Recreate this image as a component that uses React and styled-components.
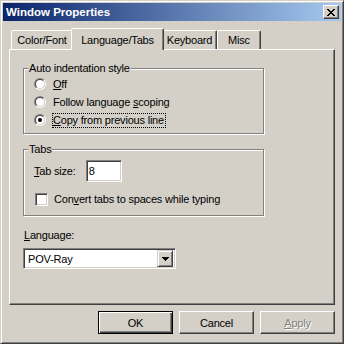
import React from "react";
import styled, { createGlobalStyle } from "styled-components";

const GlobalStyle = createGlobalStyle`
  html, body {
    margin: 0;
    padding: 0;
    background: #d4d0c8;
  }
  body {
    font-family: "Liberation Sans", Arial, sans-serif;
    font-size: 11px;
    letter-spacing: -0.2px;
    color: #000;
  }
`;

const Window = styled.div`
  width: 344px;
  height: 344px;
  box-sizing: border-box;
  background: #d4d0c8;
  border: 1px solid;
  border-color: #d4d0c8 #404040 #404040 #d4d0c8;
  box-shadow: inset 1px 1px 0 #fff, inset -1px -1px 0 #808080;
  padding: 2px;
  display: flex;
  flex-direction: column;
`;

const TitleBar = styled.div`
  height: 18px;
  flex: none;
  display: flex;
  align-items: center;
  justify-content: space-between;
  padding: 0 2px 0 3px;
  background: linear-gradient(to right, #0a246a, #a6caf0);
  color: #fff;
  font-weight: bold;
  font-size: 11.5px;
  letter-spacing: 0;
`;

const CloseButton = styled.div`
  width: 16px;
  height: 14px;
  box-sizing: border-box;
  background: #d4d0c8;
  border: 1px solid;
  border-color: #fff #404040 #404040 #fff;
  box-shadow: inset -1px -1px 0 #808080;
  display: flex;
  align-items: center;
  justify-content: center;
`;

const Body = styled.div`
  flex: 1;
  display: flex;
  flex-direction: column;
  padding: 7px 6px 7px;
`;

const TabRow = styled.div`
  height: 21px;
  display: flex;
  align-items: flex-end;
  padding-left: 2px;
`;

const Tab = styled.div`
  width: ${(p) => p.$w}px;
  height: 19px;
  box-sizing: border-box;
  background: #d4d0c8;
  border: 1px solid;
  border-bottom: none;
  border-color: #fff #404040 transparent #fff;
  border-radius: 2px 2px 0 0;
  box-shadow: inset -1px 0 0 #808080;
  display: flex;
  align-items: center;
  justify-content: center;
  ${(p) =>
    p.$active &&
    `
    height: 22px;
    margin: 0 -2px -1px;
    position: relative;
    z-index: 1;
  `}
`;

const Panel = styled.div`
  height: 256px;
  box-sizing: border-box;
  border: 1px solid;
  border-color: #fff #404040 #404040 #fff;
  box-shadow: inset -1px -1px 0 #808080;
  padding: 18px 13px 0;
  display: flex;
  flex-direction: column;
  align-items: flex-start;
`;

const GroupBox = styled.div`
  width: 241px;
  box-sizing: border-box;
  border: 1px solid #808080;
  box-shadow: 1px 1px 0 #fff, inset 1px 1px 0 #fff;
  padding: 0 0 ${(p) => p.$pb}px 10px;
  margin-top: ${(p) => p.$mt}px;
  display: flex;
  flex-direction: column;
`;

const GroupTitle = styled.div`
  align-self: flex-start;
  margin: -7px 0 0 -6px;
  padding: 0 1px;
  line-height: 13px;
  background: #d4d0c8;
`;

const RadioRow = styled.div`
  height: 18px;
  display: flex;
  align-items: center;
  &:first-of-type {
    margin-top: 4px;
  }
`;

const Radio = styled.span`
  width: 12px;
  height: 12px;
  box-sizing: border-box;
  flex: none;
  border-radius: 50%;
  border: 1px solid;
  border-color: #808080 #fff #fff #808080;
  margin-right: 6px;
  display: flex;
`;

const RadioWell = styled.span`
  flex: 1;
  border-radius: 50%;
  border: 1px solid;
  border-color: #404040 #d4d0c8 #d4d0c8 #404040;
  background: #fff;
  display: flex;
  align-items: center;
  justify-content: center;
`;

const Dot = styled.span`
  width: 4px;
  height: 4px;
  border-radius: 50%;
  background: #000;
`;

const Label = styled.span`
  border: 1px ${(p) => (p.$focus ? "dotted #000" : "solid transparent")};
  padding: 0 1px 0 0;
  line-height: 13px;
`;

const U = styled.span`
  text-decoration: underline;
`;

const FieldRow = styled.div`
  height: ${(p) => p.$h}px;
  margin-top: ${(p) => p.$mt}px;
  display: flex;
  align-items: center;
`;

const TextBox = styled.div`
  width: 36px;
  height: 22px;
  box-sizing: border-box;
  margin-left: ${(p) => p.$ml}px;
  background: #fff;
  border: 1px solid;
  border-color: #808080 #fff #fff #808080;
  box-shadow: inset 1px 1px 0 #404040, inset -1px -1px 0 #d4d0c8;
  padding: 0 2px;
  display: flex;
  align-items: center;
`;

const CheckBox = styled.span`
  width: 13px;
  height: 13px;
  box-sizing: border-box;
  flex: none;
  margin: 0 6px 0 1px;
  background: #fff;
  border: 1px solid;
  border-color: #808080 #fff #fff #808080;
  box-shadow: inset 1px 1px 0 #404040, inset -1px -1px 0 #d4d0c8;
`;

const FieldLabel = styled.div`
  margin: 13px 0 0 1px;
  line-height: 13px;
`;

const Combo = styled.div`
  width: 153px;
  height: 21px;
  box-sizing: border-box;
  margin-top: 6px;
  background: #fff;
  border: 1px solid;
  border-color: #808080 #fff #fff #808080;
  box-shadow: inset 1px 1px 0 #404040, inset -1px -1px 0 #d4d0c8;
  padding: 2px 2px 2px 4px;
  display: flex;
  align-items: center;
  justify-content: space-between;
`;

const DropButton = styled.span`
  width: 16px;
  height: 17px;
  box-sizing: border-box;
  background: #d4d0c8;
  border: 1px solid;
  border-color: #d4d0c8 #404040 #404040 #d4d0c8;
  box-shadow: inset 1px 1px 0 #fff, inset -1px -1px 0 #808080;
  display: flex;
  align-items: center;
  justify-content: center;
`;

const ButtonRow = styled.div`
  margin-top: 6px;
  display: flex;
  justify-content: flex-end;
  gap: 6px;
`;

const Button = styled.div`
  width: 75px;
  height: 23px;
  box-sizing: border-box;
  border: 1px solid;
  border-color: #fff #404040 #404040 #fff;
  box-shadow: inset -1px -1px 0 #808080;
  display: flex;
  align-items: center;
  justify-content: center;
  ${(p) =>
    p.$default &&
    `
    border-color: #000;
    box-shadow: inset 1px 1px 0 #fff, inset -1px -1px 0 #404040, inset -2px -2px 0 #808080;
  `}
  ${(p) =>
    p.$disabled &&
    `
    color: #808080;
    text-shadow: 1px 1px 0 #fff;
  `}
`;

const CloseGlyph = () => (
  <svg width="8" height="7" viewBox="0 0 8 7" shapeRendering="crispEdges">
    <path
      fill="#000"
      d="M0 0h2v1H0zM6 0h2v1H6zM1 1h2v1H1zM5 1h2v1H5zM2 2h4v1H2zM3 3h2v1H3zM2 4h4v1H2zM1 5h2v1H1zM5 5h2v1H5zM0 6h2v1H0zM6 6h2v1H6z"
    />
  </svg>
);

const DownArrow = () => (
  <svg width="7" height="4" viewBox="0 0 7 4" shapeRendering="crispEdges">
    <path fill="#000" d="M0 0h7v1H0zM1 1h5v1H1zM2 2h3v1H2zM3 3h1v1H3z" />
  </svg>
);

const RadioOption = ({ checked, focus, children }) => (
  <RadioRow>
    <Radio>
      <RadioWell>{checked && <Dot />}</RadioWell>
    </Radio>
    <Label $focus={focus}>{children}</Label>
  </RadioRow>
);

const tabs = [
  { name: "Color/Font", w: 62 },
  { name: "Language/Tabs", w: 93, active: true },
  { name: "Keyboard", w: 55 },
  { name: "Misc", w: 44 },
];

export default function App() {
  return (
    <>
      <GlobalStyle />
      <Window>
        <TitleBar>
          <span>Window Properties</span>
          <CloseButton>
            <CloseGlyph />
          </CloseButton>
        </TitleBar>
        <Body>
          <TabRow>
            {tabs.map((t) => (
              <Tab key={t.name} $w={t.w} $active={t.active}>
                {t.name}
              </Tab>
            ))}
          </TabRow>
          <Panel>
            <GroupBox $mt={0} $pb={4}>
              <GroupTitle>Auto indentation style</GroupTitle>
              <RadioOption>
                <U>O</U>ff
              </RadioOption>
              <RadioOption>
                Follow language <U>s</U>coping
              </RadioOption>
              <RadioOption checked focus>
                <U>C</U>opy from previous line
              </RadioOption>
            </GroupBox>
            <GroupBox $mt={15} $pb={7}>
              <GroupTitle>Tabs</GroupTitle>
              <FieldRow $h={22} $mt={4}>
                <span>
                  <U>T</U>ab size:
                </span>
                <TextBox $ml={10}>8</TextBox>
              </FieldRow>
              <FieldRow $h={18} $mt={8}>
                <CheckBox />
                <span>
                  Con<U>v</U>ert tabs to spaces while typing
                </span>
              </FieldRow>
            </GroupBox>
            <FieldLabel>
              <U>L</U>anguage:
            </FieldLabel>
            <Combo>
              <span>POV-Ray</span>
              <DropButton>
                <DownArrow />
              </DropButton>
            </Combo>
          </Panel>
          <ButtonRow>
            <Button $default>OK</Button>
            <Button>Cancel</Button>
            <Button $disabled>
              <U>A</U>pply
            </Button>
          </ButtonRow>
        </Body>
      </Window>
    </>
  );
}
